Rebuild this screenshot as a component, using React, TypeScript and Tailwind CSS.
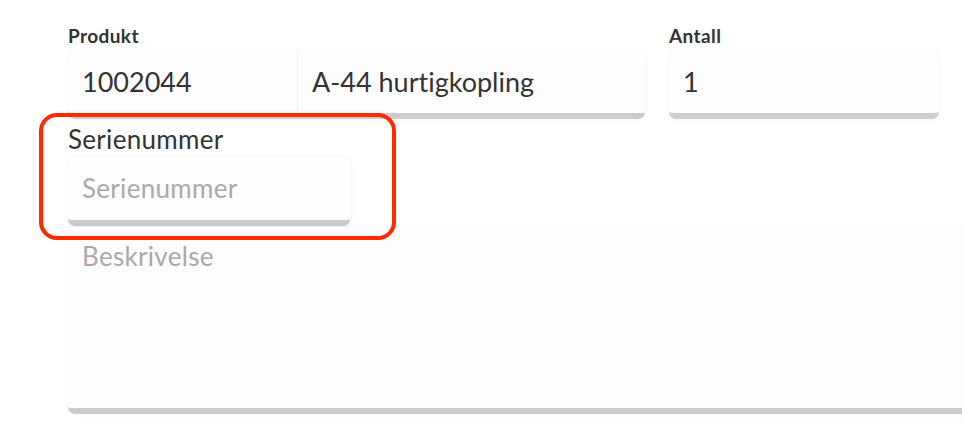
import React from "react";

const font = { fontFamily: "Lato, 'Noto Sans', sans-serif" };

const boxBase =
  "bg-[#fdfdfd] rounded-[7px] border-b-[6px] border-[#cccccc] shadow-[0_0_6px_rgba(0,0,0,0.06)]";

const App: React.FC = () => {
  return (
    <div
      className="w-[962px] h-[446px] bg-white overflow-hidden relative [font-variant-ligatures:none]"
      style={font}
    >
      <div className="pl-[68px] pt-[25px]">
        <div className="flex gap-[24px]">
          <div className="w-[577px]">
            <div className="text-[19px] font-bold tracking-[0.4px] text-[#333] leading-[22px] mb-[4px]">Produkt</div>
            <div className={`${boxBase} h-[68px] flex`}>
              <div className="w-[230px] flex items-center pl-[14px] text-[27px] text-[#333] border-r border-[#f0f0f0]">
                1002044
              </div>
              <div className="flex-1 flex items-center pl-[14px] text-[27px] text-[#333]">
                A-44 hurtigkopling
              </div>
            </div>
          </div>
          <div className="w-[270px]">
            <div className="text-[19px] font-bold tracking-[0.4px] text-[#333] leading-[22px] mb-[4px]">Antall</div>
            <div className={`${boxBase} h-[68px] flex items-center pl-[14px] text-[27px] text-[#333]`}>
              1
            </div>
          </div>
        </div>

        <div className="mt-[5px]">
          <div className="text-[26px] tracking-[0.3px] text-[#333] leading-[30px] mb-[3px]">Serienummer</div>
          <div
            className={`${boxBase} w-[282px] h-[69px] flex items-center pl-[14px] text-[26px] tracking-[0.3px] text-[#aaaaaa]`}
          >
            Serienummer
          </div>
        </div>

        <div className={`${boxBase} w-[960px] h-[187px] mt-[1px] pl-[14px] pt-[10px] text-[26px] tracking-[0.3px] text-[#aaaaaa]`}>
          Beskrivelse
        </div>
      </div>

      <div className="absolute left-[39px] top-[113px] w-[357px] h-[127px] border-[4px] border-[#ff2a00] rounded-[18px]" />
    </div>
  );
};

export default App;
